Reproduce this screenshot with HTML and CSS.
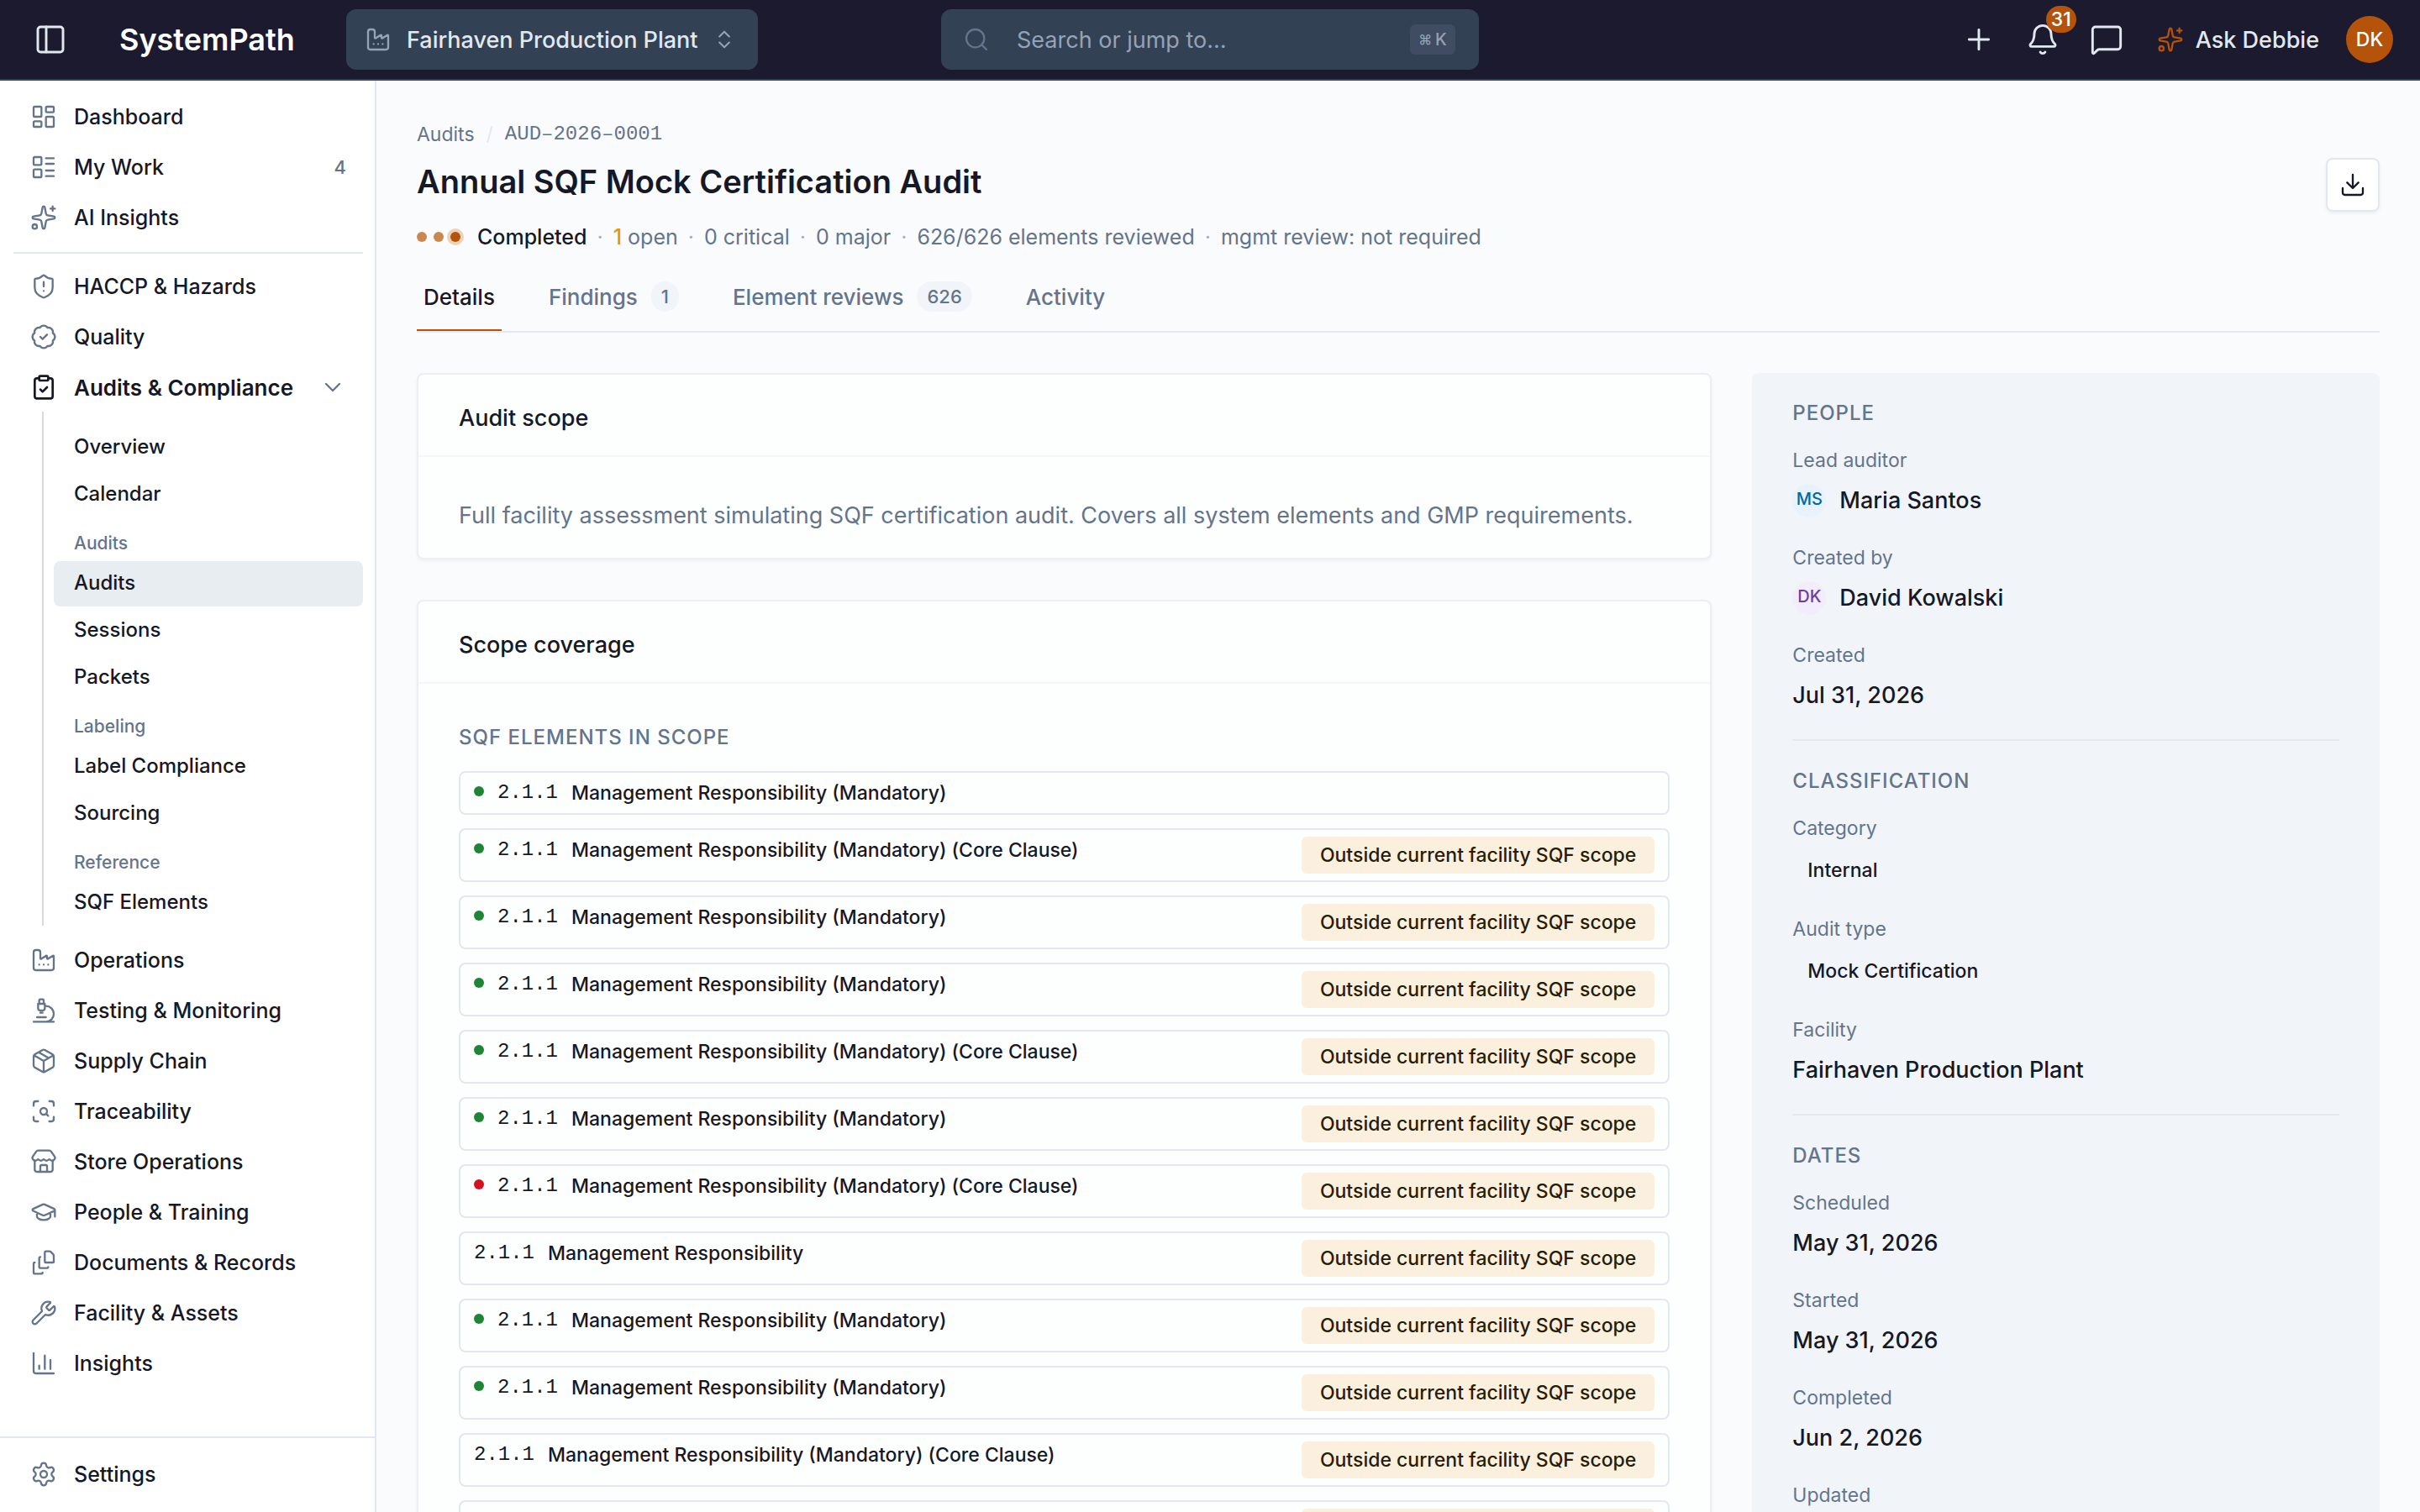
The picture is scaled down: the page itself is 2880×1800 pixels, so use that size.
FILE: index.html
```html
<!DOCTYPE html>
<html lang="en">
<head>
<meta charset="utf-8">
<meta name="viewport" content="width=device-width, initial-scale=1">
<title>Annual SQF Mock Certification Audit · SystemPath</title>
<link rel="stylesheet" href="styles.css">
</head>
<body>
<svg class="sprite" aria-hidden="true">
  <symbol id="i-panel" viewBox="0 0 24 24"><rect x="3" y="3" width="18" height="18" rx="2"/><path d="M9 3v18"/></symbol>
  <symbol id="i-factory" viewBox="0 0 24 24"><path d="M12 16h.01M16 16h.01M8 16h.01M3 19a2 2 0 0 0 2 2h14a2 2 0 0 0 2-2V8.5a.5.5 0 0 0-.769-.422l-4.462 2.844A.5.5 0 0 1 15 10.5v-2a.5.5 0 0 0-.769-.422L9.77 10.922A.5.5 0 0 1 9 10.5V5a2 2 0 0 0-2-2H5a2 2 0 0 0-2 2z"/></symbol>
  <symbol id="i-updown" viewBox="0 0 24 24"><path d="m7 15 5 5 5-5M7 9l5-5 5 5"/></symbol>
  <symbol id="i-search" viewBox="0 0 24 24"><circle cx="11" cy="11" r="8"/><path d="m21 21-4.3-4.3"/></symbol>
  <symbol id="i-plus" viewBox="0 0 24 24"><path d="M5 12h14M12 5v14"/></symbol>
  <symbol id="i-bell" viewBox="0 0 24 24"><path d="M10.268 21a2 2 0 0 0 3.464 0M3.262 15.326A1 1 0 0 0 4 17h16a1 1 0 0 0 .74-1.673C19.41 13.956 18 12.499 18 8A6 6 0 0 0 6 8c0 4.499-1.411 5.956-2.738 7.326"/></symbol>
  <symbol id="i-message" viewBox="0 0 24 24"><path d="M22 17a2 2 0 0 1-2 2H6.828a2 2 0 0 0-1.414.586l-2.202 2.202A.71.71 0 0 1 2 21.286V5a2 2 0 0 1 2-2h16a2 2 0 0 1 2 2z"/></symbol>
  <symbol id="i-sparkles" viewBox="0 0 24 24"><path d="M11.017 2.814a1 1 0 0 1 1.966 0l1.051 5.558a2 2 0 0 0 1.594 1.594l5.558 1.051a1 1 0 0 1 0 1.966l-5.558 1.051a2 2 0 0 0-1.594 1.594l-1.051 5.558a1 1 0 0 1-1.966 0l-1.051-5.558a2 2 0 0 0-1.594-1.594l-5.558-1.051a1 1 0 0 1 0-1.966l5.558-1.051a2 2 0 0 0 1.594-1.594zM20 2v4M22 4h-4"/><circle cx="4" cy="20" r="2"/></symbol>
  <symbol id="i-dashboard" viewBox="0 0 24 24"><rect x="3" y="3" width="7" height="9" rx="1"/><rect x="14" y="3" width="7" height="5" rx="1"/><rect x="14" y="12" width="7" height="9" rx="1"/><rect x="3" y="16" width="7" height="5" rx="1"/></symbol>
  <symbol id="i-list" viewBox="0 0 24 24"><rect x="3" y="3" width="7" height="7" rx="1"/><rect x="3" y="14" width="7" height="7" rx="1"/><path d="M14 4h7M14 9h7M14 15h7M14 20h7"/></symbol>
  <symbol id="i-shield" viewBox="0 0 24 24"><path d="M20 13c0 5-3.5 7.5-7.66 8.95a1 1 0 0 1-.67-.01C7.5 20.5 4 18 4 13V6a1 1 0 0 1 1-1c2 0 4.5-1.2 6.24-2.72a1.17 1.17 0 0 1 1.52 0C14.51 3.81 17 5 19 5a1 1 0 0 1 1 1zM12 8v4M12 16h.01"/></symbol>
  <symbol id="i-badge" viewBox="0 0 24 24"><path d="M3.85 8.62a4 4 0 0 1 4.78-4.77 4 4 0 0 1 6.74 0 4 4 0 0 1 4.78 4.78 4 4 0 0 1 0 6.74 4 4 0 0 1-4.77 4.78 4 4 0 0 1-6.75 0 4 4 0 0 1-4.78-4.77 4 4 0 0 1 0-6.76Z"/><path d="m9 12 2 2 4-4"/></symbol>
  <symbol id="i-clipboard" viewBox="0 0 24 24"><rect x="8" y="2" width="8" height="4" rx="1"/><path d="M16 4h2a2 2 0 0 1 2 2v14a2 2 0 0 1-2 2H6a2 2 0 0 1-2-2V6a2 2 0 0 1 2-2h2M9 14l2 2 4-4"/></symbol>
  <symbol id="i-chevron" viewBox="0 0 24 24"><path d="m6 9 6 6 6-6"/></symbol>
  <symbol id="i-microscope" viewBox="0 0 24 24"><path d="M6 18h8M3 22h18M14 22a7 7 0 1 0 0-14h-1M9 14h2M9 12a2 2 0 0 1-2-2V6h6v4a2 2 0 0 1-2 2ZM12 6V3a1 1 0 0 0-1-1H9a1 1 0 0 0-1 1v3"/></symbol>
  <symbol id="i-package" viewBox="0 0 24 24"><path d="M11 21.73a2 2 0 0 0 2 0l7-4A2 2 0 0 0 21 16V8a2 2 0 0 0-1-1.73l-7-4a2 2 0 0 0-2 0l-7 4A2 2 0 0 0 3 8v8a2 2 0 0 0 1 1.73zM12 22V12M3.29 7 12 12l8.71-5M7.5 4.27l9 5.15"/></symbol>
  <symbol id="i-scan" viewBox="0 0 24 24"><path d="M3 7V5a2 2 0 0 1 2-2h2M17 3h2a2 2 0 0 1 2 2v2M21 17v2a2 2 0 0 1-2 2h-2M7 21H5a2 2 0 0 1-2-2v-2M16 16l-1.9-1.9"/><circle cx="12" cy="12" r="3"/></symbol>
  <symbol id="i-store" viewBox="0 0 24 24"><path d="M15 21v-5a1 1 0 0 0-1-1h-4a1 1 0 0 0-1 1v5"/><path d="M17.774 10.31a1.12 1.12 0 0 0-1.549 0 2.5 2.5 0 0 1-3.451 0 1.12 1.12 0 0 0-1.548 0 2.5 2.5 0 0 1-3.452 0 1.12 1.12 0 0 0-1.549 0 2.5 2.5 0 0 1-3.77-3.248l2.889-4.184A2 2 0 0 1 7 2h10a2 2 0 0 1 1.653.873l2.895 4.192a2.5 2.5 0 0 1-3.774 3.244"/><path d="M4 10.95V19a2 2 0 0 0 2 2h12a2 2 0 0 0 2-2v-8.05"/></symbol>
  <symbol id="i-cap" viewBox="0 0 24 24"><path d="M21.42 10.922a1 1 0 0 0-.019-1.838L12.83 5.18a2 2 0 0 0-1.66 0L2.6 9.08a1 1 0 0 0 0 1.832l8.57 3.908a2 2 0 0 0 1.66 0zM22 10v6M6 12.5V16a6 3 0 0 0 12 0v-3.5"/></symbol>
  <symbol id="i-files" viewBox="0 0 24 24"><path d="M11 21a1 1 0 0 1-1 1H4a1 1 0 0 1-1-1v-8a1 1 0 0 1 1-1M16 16a1 1 0 0 1-1 1H9a1 1 0 0 1-1-1V8a1 1 0 0 1 1-1M21 6a2 2 0 0 0-.586-1.414l-2-2A2 2 0 0 0 17 2h-3a1 1 0 0 0-1 1v8a1 1 0 0 0 1 1h6a1 1 0 0 0 1-1z"/></symbol>
  <symbol id="i-wrench" viewBox="0 0 24 24"><path d="M14.7 6.3a1 1 0 0 0 0 1.4l1.6 1.6a1 1 0 0 0 1.4 0l3.106-3.105c.32-.322.863-.22.983.218a6 6 0 0 1-8.259 7.057l-7.91 7.91a1 1 0 0 1-2.999-3l7.91-7.91a6 6 0 0 1 7.057-8.259c.438.12.54.662.219.984z"/></symbol>
  <symbol id="i-chart" viewBox="0 0 24 24"><path d="M3 3v16a2 2 0 0 0 2 2h16M18 17V9M13 17V5M8 17v-3"/></symbol>
  <symbol id="i-gear" viewBox="0 0 24 24"><path d="M9.671 4.136a2.34 2.34 0 0 1 4.659 0 2.34 2.34 0 0 0 3.319 1.915 2.34 2.34 0 0 1 2.33 4.033 2.34 2.34 0 0 0 0 3.831 2.34 2.34 0 0 1-2.33 4.033 2.34 2.34 0 0 0-3.319 1.915 2.34 2.34 0 0 1-4.659 0 2.34 2.34 0 0 0-3.32-1.915 2.34 2.34 0 0 1-2.33-4.033 2.34 2.34 0 0 0 0-3.831A2.34 2.34 0 0 1 6.35 6.051a2.34 2.34 0 0 0 3.319-1.915"/><circle cx="12" cy="12" r="3"/></symbol>
  <symbol id="i-download" viewBox="0 0 24 24"><path d="M12 15V3M21 15v4a2 2 0 0 1-2 2H5a2 2 0 0 1-2-2v-4M7 10l5 5 5-5"/></symbol>
</svg>

<div class="app">
  <header class="topbar">
    <div class="topbar-left">
      <button class="icon-btn toggle" type="button" aria-label="Toggle sidebar"><svg class="icon icon-lg"><use href="#i-panel"/></svg></button>
      <a class="logo" href="#">SystemPath</a>
      <button class="facility" type="button">
        <svg class="icon facility-icon"><use href="#i-factory"/></svg>
        <span>Fairhaven Production Plant</span>
        <svg class="icon icon-sm facility-icon"><use href="#i-updown"/></svg>
      </button>
    </div>
    <label class="search">
      <svg class="icon"><use href="#i-search"/></svg>
      <input class="search-input" type="text" placeholder="Search or jump to…" aria-label="Search or jump to">
      <kbd class="kbd"><span class="kbd-cmd">⌘</span>K</kbd>
    </label>
    <div class="topbar-right">
      <button class="icon-btn" type="button" aria-label="Create"><svg class="icon icon-lg"><use href="#i-plus"/></svg></button>
      <button class="icon-btn" type="button" aria-label="Notifications"><svg class="icon icon-lg"><use href="#i-bell"/></svg><span class="notif">31</span></button>
      <button class="icon-btn" type="button" aria-label="Messages"><svg class="icon icon-lg"><use href="#i-message"/></svg></button>
      <button class="ask" type="button"><svg class="icon ask-icon"><use href="#i-sparkles"/></svg><span>Ask Debbie</span></button>
      <button class="account" type="button" aria-label="Account">DK</button>
    </div>
  </header>

  <aside class="sidebar">
    <nav class="nav" aria-label="Main">
      <a class="nav-item" href="#"><svg class="icon"><use href="#i-dashboard"/></svg><span>Dashboard</span></a>
      <a class="nav-item" href="#"><svg class="icon"><use href="#i-list"/></svg><span>My Work</span><span class="nav-count">4</span></a>
      <a class="nav-item" href="#"><svg class="icon"><use href="#i-sparkles"/></svg><span>AI Insights</span></a>
      <hr class="nav-rule">
      <a class="nav-item" href="#"><svg class="icon"><use href="#i-shield"/></svg><span>HACCP &amp; Hazards</span></a>
      <a class="nav-item" href="#"><svg class="icon"><use href="#i-badge"/></svg><span>Quality</span></a>
      <div class="nav-group">
        <button class="nav-item nav-open" type="button" aria-expanded="true"><svg class="icon"><use href="#i-clipboard"/></svg><span>Audits &amp; Compliance</span><svg class="icon nav-chevron"><use href="#i-chevron"/></svg></button>
        <div class="subnav">
          <a class="sub-item" href="#">Overview</a>
          <a class="sub-item" href="#">Calendar</a>
          <h2 class="sub-label">Audits</h2>
          <a class="sub-item sub-active" href="#" aria-current="page">Audits</a>
          <a class="sub-item" href="#">Sessions</a>
          <a class="sub-item" href="#">Packets</a>
          <h2 class="sub-label">Labeling</h2>
          <a class="sub-item" href="#">Label Compliance</a>
          <a class="sub-item" href="#">Sourcing</a>
          <h2 class="sub-label">Reference</h2>
          <a class="sub-item" href="#">SQF Elements</a>
        </div>
      </div>
      <a class="nav-item" href="#"><svg class="icon"><use href="#i-factory"/></svg><span>Operations</span></a>
      <a class="nav-item" href="#"><svg class="icon"><use href="#i-microscope"/></svg><span>Testing &amp; Monitoring</span></a>
      <a class="nav-item" href="#"><svg class="icon"><use href="#i-package"/></svg><span>Supply Chain</span></a>
      <a class="nav-item" href="#"><svg class="icon"><use href="#i-scan"/></svg><span>Traceability</span></a>
      <a class="nav-item" href="#"><svg class="icon"><use href="#i-store"/></svg><span>Store Operations</span></a>
      <a class="nav-item" href="#"><svg class="icon"><use href="#i-cap"/></svg><span>People &amp; Training</span></a>
      <a class="nav-item" href="#"><svg class="icon"><use href="#i-files"/></svg><span>Documents &amp; Records</span></a>
      <a class="nav-item" href="#"><svg class="icon"><use href="#i-wrench"/></svg><span>Facility &amp; Assets</span></a>
      <a class="nav-item" href="#"><svg class="icon"><use href="#i-chart"/></svg><span>Insights</span></a>
    </nav>
    <div class="sidebar-foot">
      <a class="nav-item" href="#"><svg class="icon"><use href="#i-gear"/></svg><span>Settings</span></a>
    </div>
  </aside>

  <main class="main">
    <nav class="crumbs" aria-label="Breadcrumb"><a href="#">Audits</a><span class="crumb-sep">/</span><span class="mono">AUD–2026–0001</span></nav>
    <div class="head">
      <h1 class="title">Annual SQF Mock Certification Audit</h1>
      <button class="download" type="button" aria-label="Download"><svg class="icon"><use href="#i-download"/></svg></button>
    </div>
    <div class="status">
      <span class="steps"><i class="step"></i><i class="step"></i><i class="step step-now"></i></span>
      <span class="state">Completed</span>
      <span class="sep">·</span><span><b class="open-count">1</b> open</span>
      <span class="sep">·</span><span>0 critical</span>
      <span class="sep">·</span><span>0 major</span>
      <span class="sep">·</span><span>626/626 elements reviewed</span>
      <span class="sep">·</span><span>mgmt review: not required</span>
    </div>
    <div class="tabs" role="tablist">
      <button class="tab tab-on" type="button" role="tab" aria-selected="true">Details</button>
      <button class="tab" type="button" role="tab">Findings<span class="pill">1</span></button>
      <button class="tab" type="button" role="tab">Element reviews<span class="pill">626</span></button>
      <button class="tab" type="button" role="tab">Activity</button>
    </div>

    <div class="columns">
      <div class="primary">
        <section class="card">
          <h2 class="card-title">Audit scope</h2>
          <p class="card-text">Full facility assessment simulating SQF certification audit. Covers all system elements and GMP requirements.</p>
        </section>
        <section class="card">
          <h2 class="card-title">Scope coverage</h2>
          <div class="card-body">
            <h3 class="eyebrow">SQF elements in scope</h3>
            <ul class="elements">
              <li class="element"><i class="dot"></i><span class="code">2.1.1</span><span>Management Responsibility (Mandatory)</span></li>
              <li class="element"><i class="dot"></i><span class="code">2.1.1</span><span>Management Responsibility (Mandatory) (Core Clause)</span><span class="tag">Outside current facility SQF scope</span></li>
              <li class="element"><i class="dot"></i><span class="code">2.1.1</span><span>Management Responsibility (Mandatory)</span><span class="tag">Outside current facility SQF scope</span></li>
              <li class="element"><i class="dot"></i><span class="code">2.1.1</span><span>Management Responsibility (Mandatory)</span><span class="tag">Outside current facility SQF scope</span></li>
              <li class="element"><i class="dot"></i><span class="code">2.1.1</span><span>Management Responsibility (Mandatory) (Core Clause)</span><span class="tag">Outside current facility SQF scope</span></li>
              <li class="element"><i class="dot"></i><span class="code">2.1.1</span><span>Management Responsibility (Mandatory)</span><span class="tag">Outside current facility SQF scope</span></li>
              <li class="element"><i class="dot dot-red"></i><span class="code">2.1.1</span><span>Management Responsibility (Mandatory) (Core Clause)</span><span class="tag">Outside current facility SQF scope</span></li>
              <li class="element"><span class="code">2.1.1</span><span>Management Responsibility</span><span class="tag">Outside current facility SQF scope</span></li>
              <li class="element"><i class="dot"></i><span class="code">2.1.1</span><span>Management Responsibility (Mandatory)</span><span class="tag">Outside current facility SQF scope</span></li>
              <li class="element"><i class="dot"></i><span class="code">2.1.1</span><span>Management Responsibility (Mandatory)</span><span class="tag">Outside current facility SQF scope</span></li>
              <li class="element"><span class="code">2.1.1</span><span>Management Responsibility (Mandatory) (Core Clause)</span><span class="tag">Outside current facility SQF scope</span></li>
              <li class="element"><i class="dot"></i><span class="code">2.1.1</span><span>Management Responsibility (Mandatory)</span><span class="tag">Outside current facility SQF scope</span></li>
            </ul>
          </div>
        </section>
      </div>

      <aside class="facts">
        <section class="fact-group">
          <h2 class="eyebrow">People</h2>
          <dl class="fact-list">
            <div class="fact"><dt>Lead auditor</dt><dd class="person"><span class="avatar">MS</span>Maria Santos</dd></div>
            <div class="fact"><dt>Created by</dt><dd class="person"><span class="avatar avatar-violet">DK</span>David Kowalski</dd></div>
            <div class="fact"><dt>Created</dt><dd>Jul 31, 2026</dd></div>
          </dl>
        </section>
        <section class="fact-group">
          <h2 class="eyebrow">Classification</h2>
          <dl class="fact-list">
            <div class="fact"><dt>Category</dt><dd class="chip">Internal</dd></div>
            <div class="fact"><dt>Audit type</dt><dd class="chip">Mock Certification</dd></div>
            <div class="fact"><dt>Facility</dt><dd>Fairhaven Production Plant</dd></div>
          </dl>
        </section>
        <section class="fact-group">
          <h2 class="eyebrow">Dates</h2>
          <dl class="fact-list">
            <div class="fact"><dt>Scheduled</dt><dd>May 31, 2026</dd></div>
            <div class="fact"><dt>Started</dt><dd>May 31, 2026</dd></div>
            <div class="fact"><dt>Completed</dt><dd>Jun 2, 2026</dd></div>
            <div class="fact"><dt>Updated</dt><dd>Jun 2, 2026</dd></div>
          </dl>
        </section>
      </aside>
    </div>
  </main>
</div>
</body>
</html>
```
FILE: styles.css
```css
:root {
  --ink: #161825;
  --muted: #64748b;
  --line: #e2e8f0;
  --slate: #334155;
  --navy: #1b1a2e;
  --orange: #b45309;
  --text-sm: 23px;
  --text-md: 25px;
  --text-lg: 27px;
}

* { box-sizing: border-box; }

body {
  margin: 0;
  font-family: Inter, "Liberation Sans", sans-serif;
  font-size: var(--text-md);
  font-weight: 500;
  color: var(--ink);
  background: #fafbfd;
}

h1, h2, h3, p, ul, dl, dd { margin: 0; padding: 0; font-weight: 500; }
ul { list-style: none; }
a { color: inherit; text-decoration: none; }
button {
  font: inherit;
  color: inherit;
  background: none;
  border: 0;
  padding: 0;
  cursor: pointer;
}

.sprite { display: none; }

.icon {
  flex: none;
  width: 32px;
  height: 32px;
  fill: none;
  stroke: currentColor;
  stroke-width: 1.75;
  stroke-linecap: round;
  stroke-linejoin: round;
}
.icon-lg { width: 40px; height: 40px; }
.icon-sm { width: 28px; height: 28px; }

.mono, .code { font-family: "Liberation Mono", monospace; font-size: 24px; font-weight: 400; }

.app {
  display: grid;
  grid-template: 96px minmax(0, 1fr) / 448px minmax(0, 1fr);
  height: 100vh;
}

/* Top bar */
.topbar {
  grid-column: 1 / -1;
  display: grid;
  grid-template-columns: 1fr minmax(0, 640px) 1fr;
  align-items: center;
  padding: 0 32px;
  background: var(--navy);
  border-bottom: 2px solid var(--slate);
  color: var(--line);
  font-size: var(--text-lg);
}
.topbar-left, .topbar-right { display: flex; align-items: center; }
.topbar-right { justify-content: flex-end; gap: 4px; }
.icon-btn {
  position: relative;
  display: flex;
  align-items: center;
  justify-content: center;
  width: 72px;
  height: 72px;
}
.toggle { width: 56px; }
.logo {
  flex: none;
  width: 212px;
  margin: 0 58px 0 54px;
  color: #fff;
  font-size: 36px;
  font-weight: 600;
}
.facility {
  display: flex;
  align-items: center;
  gap: 18px;
  height: 72px;
  padding: 0 26px 0 22px;
  border-radius: 12px;
  background: var(--slate);
}
.facility-icon { color: #94a3b8; }
.search {
  display: flex;
  align-items: center;
  height: 72px;
  padding: 0 28px 0 26px;
  border-radius: 12px;
  background: var(--slate);
  color: #64748b;
}
.search-input {
  flex: 1;
  min-width: 0;
  margin: 0 32px;
  padding: 0;
  border: 0;
  background: none;
  color: var(--line);
  font: inherit;
  font-weight: 400;
}
.search-input::placeholder { color: #94a3b8; opacity: 1; }
.kbd {
  display: flex;
  align-items: center;
  justify-content: center;
  gap: 4px;
  width: 54px;
  height: 36px;
  border-radius: 6px;
  background: #3f4c61;
  color: #94a3b8;
  font-family: Inter, "DejaVu Sans", sans-serif;
  font-size: 20px;
}
.kbd-cmd { font-size: 16px; }
.notif {
  position: absolute;
  top: -4px;
  left: 40px;
  width: 36px;
  height: 32px;
  border-radius: 16px;
  background: var(--orange);
  color: #fff;
  font-size: 23px;
  line-height: 32px;
  text-align: center;
}
.ask {
  display: flex;
  align-items: center;
  gap: 14px;
  height: 72px;
  padding: 0 20px;
}
.ask-icon { color: var(--orange); }
.account {
  width: 56px;
  height: 56px;
  margin-left: 8px;
  border-radius: 50%;
  background: var(--orange);
  color: #fff;
  font-size: var(--text-sm);
}

/* Sidebar */
.sidebar {
  display: flex;
  flex-direction: column;
  min-height: 0;
  border-right: 2px solid var(--line);
  background: #fff;
}
.nav {
  flex: 1;
  display: flex;
  flex-direction: column;
  gap: 4px;
  min-height: 0;
  padding: 16px 14px 16px 16px;
  overflow-y: auto;
  scrollbar-width: none;
}
.nav-item {
  flex: none;
  display: flex;
  align-items: center;
  gap: 20px;
  width: 100%;
  height: 56px;
  padding: 0 20px 2px;
  text-align: left;
  white-space: nowrap;
}
.nav-item .icon { color: var(--muted); }
.nav-count { margin-left: auto; color: var(--muted); font-size: 22px; }
.nav-rule {
  flex: none;
  width: 100%;
  height: 2px;
  margin: 8px 0;
  border: 0;
  background: var(--line);
}
.nav-open { font-size: 26px; font-weight: 600; }
.nav-item.nav-open .icon { color: var(--ink); stroke-width: 2; }
.nav-item.nav-open .nav-chevron { margin-left: auto; color: var(--muted); stroke-width: 1.75; }
.nav-group { margin-bottom: 10px; }
.subnav {
  display: flex;
  flex-direction: column;
  gap: 2px;
  margin-left: 34px;
  padding: 16px 0 0 12px;
  border-left: 2px solid #d6d9dd;
}
.sub-item {
  height: 54px;
  padding: 0 24px;
  border-radius: 8px;
  font-size: 24px;
  line-height: 52px;
}
.sub-active { background: #e8edf2; }
.sub-label {
  padding: 14px 24px 4px;
  color: var(--muted);
  font-size: 21px;
  line-height: 30px;
}
.sidebar-foot {
  padding: 16px 14px 16px 16px;
  border-top: 2px solid var(--line);
}

/* Page head */
.main {
  min-width: 0;
  padding: 48px 48px 0;
  overflow-y: auto;
  scrollbar-width: none;
}
.crumbs {
  display: flex;
  gap: 14px;
  color: var(--muted);
  font-size: var(--text-sm);
  font-weight: 400;
  line-height: 32px;
}
.crumb-sep { color: var(--line); }
.head {
  display: flex;
  justify-content: space-between;
  margin-top: 12px;
}
.title { font-size: 38px; font-weight: 600; line-height: 56px; }
.download {
  display: flex;
  align-items: center;
  justify-content: center;
  width: 64px;
  height: 64px;
  border: 2px solid var(--line);
  border-radius: 8px;
  background: #fff;
  box-shadow: 0 2px 4px rgb(15 23 42 / 6%);
}
.status {
  display: flex;
  align-items: center;
  gap: 12px;
  margin-top: 14px;
  color: var(--muted);
  font-weight: 400;
  line-height: 32px;
}
.steps { display: flex; gap: 8px; margin-right: 8px; }
.step {
  width: 12px;
  height: 12px;
  border-radius: 50%;
  background: #c9884f;
}
.step-now { background: var(--orange); box-shadow: 0 0 0 4px #ecd2b9; }
.state { color: var(--ink); font-weight: 500; }
.sep { color: #a3aebd; }
.open-count { color: #e5960f; font-weight: 500; }
.tabs {
  display: flex;
  gap: 48px;
  margin-top: 16px;
  border-bottom: 2px solid var(--line);
}
.tab {
  display: flex;
  align-items: center;
  gap: 16px;
  height: 80px;
  padding: 0 8px;
  border-bottom: 2px solid transparent;
  color: var(--muted);
  font-size: 26px;
}
.tab-on { border-color: var(--orange); color: var(--ink); }
.pill {
  height: 36px;
  padding: 0 12px;
  border-radius: 18px;
  background: #f1f5f9;
  font-size: 22px;
  line-height: 36px;
}

/* Content */
.columns {
  display: grid;
  grid-template-columns: repeat(3, minmax(0, 1fr));
  gap: 48px;
  margin-top: 48px;
}
.primary {
  grid-column: span 2;
  display: flex;
  flex-direction: column;
  gap: 48px;
}
.card {
  border: 2px solid #ebeff4;
  border-radius: 8px;
  background: #fdfefe;
  box-shadow: 0 2px 4px rgb(15 23 42 / 5%);
}
.card-title {
  padding: 32px 48px 24px;
  border-bottom: 2px solid #f4f7fa;
  font-size: var(--text-lg);
  line-height: 40px;
}
.card-text {
  padding: 48px 48px 28px;
  color: var(--muted);
  font-size: var(--text-lg);
  font-weight: 400;
  line-height: 44px;
}
.card-body { padding: 48px; }
.eyebrow {
  color: var(--muted);
  font-size: 24px;
  letter-spacing: 1px;
  line-height: 32px;
  text-transform: uppercase;
}
.elements {
  display: flex;
  flex-direction: column;
  gap: 16px;
  margin-top: 24px;
}
.element {
  display: flex;
  align-items: flex-start;
  gap: 16px;
  padding: 8px 16px;
  border: 2px solid var(--line);
  border-radius: 8px;
  font-size: var(--text-sm);
  line-height: 32px;
}
.dot {
  width: 12px;
  height: 12px;
  margin-top: 8px;
  border-radius: 50%;
  background: #1f8434;
}
.dot-red { background: #d4121f; }
.tag {
  margin-left: auto;
  padding: 0 22px;
  border-radius: 6px;
  background: #fbf0de;
  color: #271c05;
  line-height: 44px;
}

.facts {
  padding: 32px 48px;
  border-radius: 8px;
  background: #f1f5f9;
}
.fact-group + .fact-group {
  margin-top: 32px;
  padding-top: 32px;
  border-top: 2px solid var(--line);
}
.fact-list {
  display: flex;
  flex-direction: column;
  gap: 32px;
  margin-top: 24px;
}
.fact dt {
  margin-bottom: 12px;
  color: var(--muted);
  font-size: var(--text-sm);
  font-weight: 400;
  line-height: 32px;
}
.fact dd { font-size: var(--text-lg); line-height: 40px; }
.person { display: flex; align-items: center; gap: 16px; }
.avatar {
  width: 40px;
  height: 40px;
  border-radius: 50%;
  background: #e8f2fd;
  color: #0369a1;
  font-size: 20px;
  line-height: 36px;
  text-align: center;
}
.avatar-violet { background: #f3ecfc; color: #6b3fa0; }
.fact .chip {
  padding: 0 18px;
  font-size: var(--text-sm);
  line-height: 44px;
}
```
